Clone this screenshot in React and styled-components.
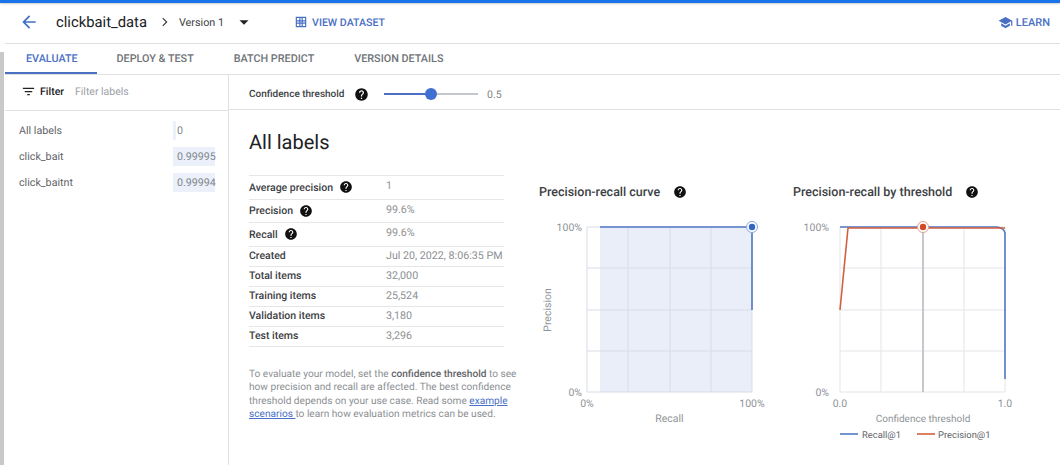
import React from 'react';
import styled, { createGlobalStyle } from 'styled-components';

const HELP = 'M12 2C6.48 2 2 6.48 2 12s4.48 10 10 10 10-4.48 10-10S17.52 2 12 2zm1 17h-2v-2h2v2zm2.07-7.75l-.9.92C13.45 12.9 13 13.5 13 15h-2v-.5c0-1.1.45-2.1 1.17-2.83l1.24-1.26c.37-.36.59-.86.59-1.41 0-1.1-.9-2-2-2s-2 .9-2 2H8c0-2.21 1.79-4 4-4s4 1.79 4 4c0 .88-.36 1.68-.93 2.25z';

const Icon = ({ d, size = 16, color = 'currentColor' }) => (
  <svg width={size} height={size} viewBox="0 0 24 24" fill={color} style={{ flex: 'none', display: 'block' }}>
    <path d={d} />
  </svg>
);

const Help = ({ size = 15 }) => <Icon d={HELP} size={size} color="#111" />;

const tabs = ['EVALUATE', 'DEPLOY & TEST', 'BATCH PREDICT', 'VERSION DETAILS'];

const labels = [
  { name: 'All labels', score: '0', bar: 3 },
  { name: 'click_bait', score: '0.99995', bar: 42 },
  { name: 'click_baitnt', score: '0.99994', bar: 42 },
];

const metrics = [
  { name: 'Average precision', value: '1', help: true },
  { name: 'Precision', value: '99.6%', help: true },
  { name: 'Recall', value: '99.6%', help: true },
  { name: 'Created', value: 'Jul 20, 2022, 8:06:35 PM' },
  { name: 'Total items', value: '32,000' },
  { name: 'Training items', value: '25,524' },
  { name: 'Validation items', value: '3,180' },
  { name: 'Test items', value: '3,296' },
];

const App = () => {
  return (
    <Page>
      <GlobalStyle />
      <TopBar />
      <Shell>
        <Rail>
          <RailStrip />
        </Rail>
        <Content>
          <Header>
            <BackButton>
              <Icon d="M20 11H7.83l5.59-5.59L12 4l-8 8 8 8 1.41-1.41L7.83 13H20v-2z" size={20} color="#3f6fc4" />
            </BackButton>
            <Title>clickbait_data</Title>
            <Crumb>
              <Icon d="M9.2 5.5L8 6.7l5.3 5.3L8 17.3l1.2 1.2 6.5-6.5z" size={16} color="#333" />
            </Crumb>
            <Version>Version 1</Version>
            <Caret>
              <Icon d="M6 9.5l6 6 6-6z" size={18} color="#222" />
            </Caret>
            <ViewDataset>
              <Icon d="M3 3h18v18H3V3zm2 2v4h4V5H5zm6 0v4h2V5h-2zm4 0v4h4V5h-4zM5 11v2h4v-2H5zm6 0v2h2v-2h-2zm4 0v2h4v-2h-4zM5 15v4h4v-4H5zm6 0v4h2v-4h-2zm4 0v4h4v-4h-4z" size={14} />
              VIEW DATASET
            </ViewDataset>
            <Learn>
              <Icon d="M5 13.18v4L12 21l7-3.82v-4L12 17l-7-3.82zM12 3L1 9l11 6 9-4.91V17h2V9L12 3z" size={15} />
              LEARN
            </Learn>
          </Header>

          <TabBar>
            {tabs.map((t, i) => (
              <Tab key={t} $active={i === 0}>{t}</Tab>
            ))}
          </TabBar>

          <Body>
            <Sidebar>
              <FilterRow>
                <Icon d="M10 18h4v-2h-4v2zM3 6v2h18V6H3zm3 7h12v-2H6v2z" size={15} color="#222" />
                <FilterLabel>Filter</FilterLabel>
                <FilterHint>Filter labels</FilterHint>
              </FilterRow>
              <LabelList>
                {labels.map((l) => (
                  <LabelRow key={l.name}>
                    <span>{l.name}</span>
                    <Score>
                      <ScoreBar style={{ width: l.bar }} />
                      <ScoreText>{l.score}</ScoreText>
                    </Score>
                  </LabelRow>
                ))}
              </LabelList>
            </Sidebar>

            <Main>
              <ThresholdRow>
                <ThresholdLabel>Confidence threshold</ThresholdLabel>
                <Help size={15} />
                <Slider>
                  <SliderFill />
                  <SliderThumb />
                </Slider>
                <ThresholdValue>0.5</ThresholdValue>
              </ThresholdRow>

              <Details>
                <Summary>
                  <Heading>All labels</Heading>
                  <MetricTable>
                    {metrics.map((m) => (
                      <MetricRow key={m.name} $tall={m.help}>
                        <MetricName>
                          {m.name}
                          {m.help && <Help size={14} />}
                        </MetricName>
                        <MetricValue $tall={m.help}>{m.value}</MetricValue>
                      </MetricRow>
                    ))}
                  </MetricTable>
                  <Note>
                    To evaluate your model, set the <b>confidence threshold</b> to see
                    how precision and recall are affected. The best confidence
                    threshold depends on your use case. Read some <NoteLink>example
                    scenarios </NoteLink> to learn how evaluation metrics can be used.
                  </Note>
                </Summary>

                <ChartBlock $width={254}>
                  <ChartTitle>
                    Precision-recall curve
                    <Help size={14} />
                  </ChartTitle>
                  <CurveChart />
                </ChartBlock>

                <ChartBlock $width={267}>
                  <ChartTitle>
                    Precision-recall by threshold
                    <Help size={14} />
                  </ChartTitle>
                  <ThresholdChart />
                </ChartBlock>
              </Details>
            </Main>
          </Body>
        </Content>
      </Shell>
    </Page>
  );
};

// chart svgs: plot area is always 165 square
const PLOT = { l: 48, r: 213, t: 11, b: 176 };
const xs = [0, 41, 83, 124, 165].map((v) => PLOT.l + v);
const ys = [0, 41, 83, 124, 165].map((v) => PLOT.t + v);

const Grid = ({ color }) => (
  <g stroke={color} strokeWidth="1">
    {xs.map((x) => <line key={x} x1={x} x2={x} y1={PLOT.t} y2={PLOT.b} />)}
    {ys.map((y) => <line key={y} x1={PLOT.l} x2={PLOT.r} y1={y} y2={y} />)}
  </g>
);

const axisText = { fontFamily: 'Roboto, sans-serif', fontSize: 10.5, fill: '#8f9398' };

const CurveChart = () => (
  <svg width="254" height="240" style={{ display: 'block' }}>
    <g transform="translate(9 0)">
      <rect x={PLOT.l + 13} y={PLOT.t} width={152} height={165} fill="#e9eef9" />
      <Grid color="#d8dce5" />
      <path d={`M${PLOT.l + 13} ${PLOT.t}H${PLOT.r}V${PLOT.t + 83}`} fill="none" stroke="#5078c6" strokeWidth="1.6" />
      <circle cx={PLOT.r} cy={PLOT.t} r="5.5" fill="#fff" stroke="#8aa8dc" strokeWidth="1" />
      <circle cx={PLOT.r} cy={PLOT.t} r="3.2" fill="#3367c4" />
      <text {...axisText} x={PLOT.l - 5} y={PLOT.t + 4} textAnchor="end">100%</text>
      <text {...axisText} x={PLOT.l - 5} y={PLOT.b + 4} textAnchor="end">0%</text>
      <text {...axisText} x={PLOT.l} y={PLOT.b + 15} textAnchor="middle">0%</text>
      <text {...axisText} x={PLOT.r} y={PLOT.b + 15} textAnchor="middle">100%</text>
      <text {...axisText} x={(PLOT.l + PLOT.r) / 2} y={PLOT.b + 30} textAnchor="middle">Recall</text>
      <text {...axisText} transform={`translate(12 ${PLOT.t + 83}) rotate(-90)`} textAnchor="middle">Precision</text>
    </g>
  </svg>
);

const ThresholdChart = () => (
  <svg width="267" height="240" style={{ display: 'block' }}>
    <g transform="translate(8 0)">
      <Grid color="#e4e5e8" />
      <line x1={131} x2={131} y1={PLOT.t} y2={PLOT.b} stroke="#b4b6b9" strokeWidth="1.4" />
      <path d={`M${PLOT.l} ${PLOT.t}H${PLOT.r - 8}Q${PLOT.r - 1} ${PLOT.t + 1} ${PLOT.r} ${PLOT.t + 6}V${PLOT.t + 152}`} fill="none" stroke="#5078c6" strokeWidth="1.6" />
      <path d={`M${PLOT.l} ${PLOT.t + 83}L${PLOT.l + 8} ${PLOT.t + 1}H${PLOT.r}`} fill="none" stroke="#d2603f" strokeWidth="1.6" />
      <circle cx={131} cy={PLOT.t} r="5.5" fill="#fff" stroke="#e0a08e" strokeWidth="1" />
      <circle cx={131} cy={PLOT.t} r="3.2" fill="#cf4a26" />
      <text {...axisText} x={PLOT.l - 11} y={PLOT.t + 4} textAnchor="end">100%</text>
      <text {...axisText} x={PLOT.l - 11} y={PLOT.b + 4} textAnchor="end">0%</text>
      <text {...axisText} x={PLOT.l} y={PLOT.b + 15} textAnchor="middle">0.0</text>
      <text {...axisText} x={PLOT.r} y={PLOT.b + 15} textAnchor="middle">1.0</text>
      <text {...axisText} fontSize="10" x={131} y={PLOT.b + 30} textAnchor="middle">Confidence threshold</text>
      <line x1={48} x2={66} y1={PLOT.b + 42} y2={PLOT.b + 42} stroke="#5078c6" strokeWidth="1.6" />
      <text {...axisText} fontSize="9.4" fill="#5f6368" x={70} y={PLOT.b + 45.5}>Recall@1</text>
      <line x1={125} x2={143} y1={PLOT.b + 42} y2={PLOT.b + 42} stroke="#d2603f" strokeWidth="1.6" />
      <text {...axisText} fontSize="9.4" fill="#5f6368" x={146} y={PLOT.b + 45.5}>Precision@1</text>
    </g>
  </svg>
);

const GlobalStyle = createGlobalStyle`
  html, body {
    margin: 0;
    padding: 0;
    background: #fff;
    overflow: hidden;
  }
  * {
    box-sizing: border-box;
  }
`;

const Page = styled.div`
  width: 1060px;
  height: 465px;
  overflow: hidden;
  display: flex;
  flex-direction: column;
  font-family: Roboto, "Liberation Sans", sans-serif;
  text-rendering: geometricPrecision;
  color: #3c4043;
  background: #fff;
`;

const TopBar = styled.div`
  height: 3px;
  flex: none;
  background: #1a73e8;
  box-shadow: 0 1px 2px rgba(60, 64, 67, 0.25);
`;

const Shell = styled.div`
  flex: 1;
  display: flex;
  min-height: 0;
`;

const Rail = styled.div`
  width: 5px;
  flex: none;
  padding-top: 49px;
  display: flex;
`;

const RailStrip = styled.div`
  width: 4px;
  background: #c9c9c9;
`;

const Content = styled.div`
  flex: 1;
  display: flex;
  flex-direction: column;
  min-width: 0;
`;

const Header = styled.div`
  height: 41px;
  flex: none;
  display: flex;
  align-items: center;
  padding: 0 10px 2px 14px;
  border-bottom: 1px solid #e0e0e0;
`;

const BackButton = styled.div`
  width: 37px;
  display: flex;
`;

const Title = styled.div`
  font-size: 14.8px;
  color: #202124;
`;

const Crumb = styled.div`
  margin-left: 10px;
`;

const Version = styled.div`
  margin-left: 6px;
  font-size: 10.8px;
  color: #3c4043;
`;

const Caret = styled.div`
  margin-left: 11px;
`;

const ViewDataset = styled.div`
  margin-left: 41px;
  display: flex;
  align-items: center;
  gap: 4px;
  font-size: 10.6px;
  font-weight: 500;
  color: #4a70c4;
`;

const Learn = styled(ViewDataset)`
  margin-left: auto;
  gap: 3px;
  font-size: 11px;
`;

const TabBar = styled.div`
  height: 31px;
  flex: none;
  display: flex;
  border-bottom: 1px solid #e0e0e0;
`;

const Tab = styled.div`
  padding: 0 20px 2px;
  display: flex;
  align-items: center;
  height: 30px;
  font-size: 10.8px;
  font-weight: 500;
  color: ${(p) => (p.$active ? '#4a70c4' : '#6f7377')};
  box-shadow: ${(p) => (p.$active ? 'inset 0 -2px 0 #4a70c4' : 'none')};
  &:first-child {
    padding: 0 19px 2px 21px;
  }
`;

const Body = styled.div`
  flex: 1;
  display: flex;
  min-height: 0;
`;

const Sidebar = styled.div`
  width: 224px;
  flex: none;
  border-right: 1px solid #e0e0e0;
`;

const FilterRow = styled.div`
  height: 36px;
  display: flex;
  align-items: center;
  gap: 4px;
  padding: 0 0 2px 16px;
  border-bottom: 1px solid #e0e0e0;
`;

const FilterLabel = styled.span`
  font-size: 10.5px;
  font-weight: 500;
  color: #202124;
`;

const FilterHint = styled.span`
  margin-left: 7px;
  font-size: 10.5px;
  color: #9aa0a6;
`;

const LabelList = styled.div`
  padding-top: 9px;
  display: flex;
  flex-direction: column;
  gap: 5px;
`;

const LabelRow = styled.div`
  height: 21px;
  display: flex;
  align-items: center;
  justify-content: space-between;
  padding-left: 14px;
  font-size: 10.7px;
  color: #5f6368;
`;

const Score = styled.div`
  position: relative;
  width: 55px;
  height: 100%;
  display: flex;
  align-items: center;
`;

const ScoreBar = styled.div`
  position: absolute;
  left: 0;
  top: 1px;
  bottom: 1px;
  background: #ebf0fa;
`;

const ScoreText = styled.span`
  position: relative;
  padding-left: 4px;
  color: #80868b;
`;

const Main = styled.div`
  flex: 1;
  min-width: 0;
  display: flex;
  flex-direction: column;
`;

const ThresholdRow = styled.div`
  height: 35px;
  flex: none;
  display: flex;
  align-items: center;
  padding: 4px 0 0 20px;
  border-bottom: 1px solid #e0e0e0;
`;

const ThresholdLabel = styled.span`
  width: 105px;
  font-size: 10px;
  font-weight: 500;
  color: #3c4043;
`;

const Slider = styled.div`
  position: relative;
  width: 94px;
  height: 2px;
  margin-left: 15px;
  background: #c4c7cc;
`;

const SliderFill = styled.div`
  width: 50%;
  height: 100%;
  background: #4a70c4;
`;

const SliderThumb = styled.div`
  position: absolute;
  left: 41px;
  top: -5px;
  width: 12px;
  height: 12px;
  border-radius: 50%;
  background: #3f6fd0;
`;

const ThresholdValue = styled.span`
  margin-left: 9px;
  font-size: 10.5px;
  color: #80868b;
`;

const Details = styled.div`
  flex: 1;
  display: flex;
  min-height: 0;
`;

const Summary = styled.div`
  width: 301px;
  flex: none;
  padding: 20px 0 0 20px;
`;

const Heading = styled.div`
  font-size: 20px;
  line-height: 24px;
  color: #202124;
`;

const MetricTable = styled.div`
  width: 255px;
  margin-top: 21px;
  border-top: 1px solid #e6e6e6;
`;

const MetricRow = styled.div`
  height: ${(p) => (p.$tall ? '23.5px' : '20px')};
  display: grid;
  grid-template-columns: 137px 1fr;
  align-items: center;
  padding-bottom: ${(p) => (p.$tall ? 0 : 2)}px;
  border-bottom: 1px solid #e6e6e6;
  font-size: 10.5px;
`;

const MetricName = styled.div`
  display: flex;
  align-items: center;
  gap: 6px;
  font-weight: 500;
  color: #3c4043;
`;

const MetricValue = styled.div`
  white-space: nowrap;
  font-size: 10.7px;
  color: #8c9094;
  padding-bottom: ${(p) => (p.$tall ? 3 : 0)}px;
`;

const Note = styled.div`
  width: 278px;
  margin-top: 21.5px;
  font-size: 10.15px;
  line-height: 13.4px;
  color: #8c9094;
  b {
    font-weight: 500;
    color: #5f6368;
  }
`;

const NoteLink = styled.span`
  color: #4a70c4;
  text-decoration: underline;
`;

const ChartBlock = styled.div`
  width: ${(p) => p.$width}px;
  flex: none;
  margin-top: 75px;
`;

const ChartTitle = styled.div`
  height: 31px;
  padding-left: 9px;
  display: flex;
  align-items: flex-start;
  gap: 13px;
  font-size: 12.5px;
  line-height: 16px;
  font-weight: 500;
  color: #3c4043;
`;

export default App;
